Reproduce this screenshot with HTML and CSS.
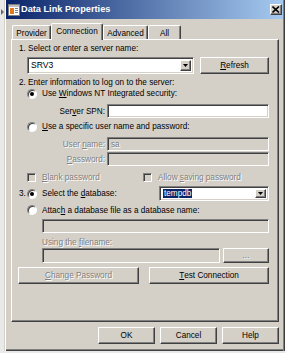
FILE: index.html
```html
<!DOCTYPE html>
<html lang="en">
<head>
    <meta charset="UTF-8">
    <meta name="viewport" content="width=device-width, initial-scale=1.0">
    <title>Data Link Properties</title>
    <link rel="stylesheet" href="styles.css">
</head>
<body>
    <div class="desk"><span class="desk-arrow"></span></div>
    <div class="window">
        <div class="titlebar">
            <svg class="app-icon" width="12" height="12" viewBox="0 0 12 12">
                <rect x="0.5" y="0.5" width="11" height="11" fill="#fff" stroke="#808080"/>
                <rect x="1" y="1" width="10" height="2" fill="#c0c0c0"/>
                <rect x="2" y="4" width="4" height="6" fill="#e07a1f"/>
                <rect x="7" y="4" width="3" height="1" fill="#808080"/>
                <rect x="7" y="6" width="3" height="1" fill="#808080"/>
                <rect x="7" y="8" width="3" height="1" fill="#808080"/>
            </svg>
            <span class="title">Data Link Properties</span>
            <span class="close-btn">
                <svg width="8" height="7" viewBox="0 0 8 7"><path d="M0.5 0.5L7 6.5M7 0.5L0.5 6.5" stroke="#000" stroke-width="1.6"/></svg>
            </span>
        </div>

        <div class="tabs">
            <div class="tab tab-provider">Provider</div>
            <div class="tab tab-connection active">Connection</div>
            <div class="tab tab-advanced">Advanced</div>
            <div class="tab tab-all">All</div>
        </div>

        <div class="panel">
            <div class="label-row">1. Select or enter a server name:</div>
            <div class="server-row">
                <div class="combo server-combo">
                    <span class="combo-text">SRV3</span>
                    <span class="combo-btn"><svg width="5" height="3" viewBox="0 0 5 3"><path d="M0 0H5L2.5 3Z" fill="#000"/></svg></span>
                </div>
                <div class="button refresh-btn"><u>R</u>efresh</div>
            </div>

            <div class="label-row step-two">2. Enter information to log on to the server:</div>
            <div class="option-row">
                <span class="radio checked"></span>
                <span>Use <u>W</u>indows NT Integrated security:</span>
            </div>
            <div class="field-row spn-row">
                <span class="field-label">Ser<u>v</u>er SPN:</span>
                <span class="textbox"></span>
            </div>
            <div class="option-row user-option">
                <span class="radio"></span>
                <span><u>U</u>se a specific user name and password:</span>
            </div>
            <div class="field-row user-row disabled">
                <span class="field-label">User <u>n</u>ame:</span>
                <span class="textbox">sa</span>
            </div>
            <div class="field-row pass-row disabled">
                <span class="field-label"><u>P</u>assword:</span>
                <span class="textbox"></span>
            </div>
            <div class="check-row disabled">
                <span class="check-item"><span class="checkbox"></span><span><u>B</u>lank password</span></span>
                <span class="check-item"><span class="checkbox"></span><span>Allow <u>s</u>aving password</span></span>
            </div>

            <div class="db-row">
                <span class="step-num">3.</span>
                <span class="radio checked"></span>
                <span class="db-label">Select the <u>d</u>atabase:</span>
                <div class="combo db-combo">
                    <span class="combo-text"><span class="selected">tempdb</span></span>
                    <span class="combo-btn"><svg width="5" height="3" viewBox="0 0 5 3"><path d="M0 0H5L2.5 3Z" fill="#000"/></svg></span>
                </div>
            </div>
            <div class="option-row attach-option">
                <span class="radio"></span>
                <span>Attac<u>h</u> a database file as a database name:</span>
            </div>
            <div class="textbox attach-box"></div>
            <div class="label-row using-label disabled"><span>Using the <u>f</u>ilename:</span></div>
            <div class="file-row">
                <span class="textbox file-box"></span>
                <span class="button browse-btn disabled"><span>...</span></span>
            </div>
            <div class="action-row">
                <div class="button change-btn disabled"><span><u>C</u>hange Password</span></div>
                <div class="button test-btn"><u>T</u>est Connection</div>
            </div>
        </div>

        <div class="footer">
            <div class="button footer-btn">OK</div>
            <div class="button footer-btn">Cancel</div>
            <div class="button footer-btn">Help</div>
        </div>
    </div>
</body>
</html>
```

FILE: styles.css
```css
* {
    box-sizing: border-box;
}

html, body {
    margin: 0;
}

body {
    width: 285px;
    height: 353px;
    overflow: hidden;
    display: flex;
    background: #e9e9e9;
    font-family: "Liberation Sans", Arial, sans-serif;
    font-size: 8.2px;
    line-height: 11px;
    color: #000;
}

u {
    text-decoration: underline;
    text-underline-offset: 1px;
}

.desk {
    width: 4px;
    padding-top: 9px;
}

.desk-arrow {
    display: block;
    width: 0;
    height: 0;
    margin-left: 1px;
    border-left: 3px solid #6a6a6a;
    border-top: 3px solid transparent;
    border-bottom: 3px solid transparent;
}

.window {
    flex: 1;
    height: 351px;
    display: flex;
    flex-direction: column;
    background: #d4d0c8;
    padding: 0 2px 0 2px;
    box-shadow: inset 1px 0 #d4d0c8, inset 2px 0 #fff, inset -1px 0 #404040, inset -2px 0 #808080, inset 0 -1px #404040, inset 0 -2px #808080;
}

/* title bar */
.titlebar {
    height: 19px;
    display: flex;
    align-items: center;
    padding-left: 2px;
    background: linear-gradient(to right, #0a246a, #a6caf0);
    color: #fff;
}

.app-icon {
    margin-right: 1px;
}

.title {
    flex: 1;
    font-weight: bold;
    font-size: 9.2px;
}

.close-btn {
    width: 12px;
    height: 11px;
    margin-right: 1px;
    display: flex;
    align-items: center;
    justify-content: center;
    background: #d4d0c8;
    border: 1px solid;
    border-color: #fff #404040 #404040 #fff;
    box-shadow: inset -1px -1px #808080;
}

/* tabs */
.tabs {
    display: flex;
    align-items: flex-end;
    height: 16px;
    margin-top: 4px;
    margin-left: 6px;
}

.tab {
    height: 14px;
    display: flex;
    align-items: center;
    justify-content: center;
    background: #d4d0c8;
    border: 1px solid;
    border-bottom: none;
    border-color: #fff #404040 #404040 #fff;
    border-radius: 2px 2px 0 0;
    box-shadow: inset -1px 0 #808080;
    padding-top: 1px;
}

.tab.active {
    height: 17px;
    margin-bottom: -1px;
    position: relative;
    z-index: 1;
    padding-top: 0;
    padding-bottom: 2px;
}

.tab-provider { width: 39px; }
.tab-connection { width: 52px; }
.tab-advanced { width: 45px; }
.tab-all { width: 33px; }

/* property page */
.panel {
    width: 268px;
    height: 283px;
    margin-left: 5px;
    padding: 3px 9px 0 7px;
    display: flex;
    flex-direction: column;
    border: 1px solid;
    border-color: #fff #404040 #404040 #fff;
    box-shadow: inset -1px -1px #808080;
}

.disabled {
    color: #808080;
    text-shadow: 1px 1px 0 #fff;
}

.label-row {
    height: 11px;
    white-space: nowrap;
}

.step-two {
    margin-top: 3px;
}

.server-row {
    display: flex;
    margin-top: 3px;
    height: 17px;
}

.combo {
    display: flex;
    align-items: stretch;
    background: #fff;
    border: 1px solid;
    border-color: #808080 #fff #fff #808080;
    box-shadow: inset 1px 1px #404040, inset -1px -1px #d4d0c8;
    padding: 2px;
}

.combo-text {
    flex: 1;
    display: flex;
    align-items: center;
    padding-left: 1px;
}

.combo-btn {
    width: 11px;
    display: flex;
    align-items: center;
    justify-content: center;
    background: #d4d0c8;
    border: 1px solid;
    border-color: #fff #404040 #404040 #fff;
    box-shadow: inset -1px -1px #808080;
}

.server-combo {
    width: 167px;
    margin-left: 8px;
    font-size: 8.6px;
}

.button {
    display: flex;
    align-items: center;
    justify-content: center;
    background: #d4d0c8;
    border: 1px solid;
    border-color: #fff #404040 #404040 #fff;
    box-shadow: inset -1px -1px #808080;
    white-space: nowrap;
}

.refresh-btn {
    width: 69px;
    margin-left: 6px;
}

.option-row {
    display: flex;
    align-items: center;
    height: 11px;
    padding-left: 8px;
    white-space: nowrap;
}

.radio {
    width: 10px;
    height: 10px;
    margin-right: 5px;
    flex-shrink: 0;
    display: flex;
    align-items: center;
    justify-content: center;
    border-radius: 50%;
    background: #fff;
    border: 1px solid;
    border-color: #808080 #fff #fff #808080;
    box-shadow: inset 1px 1px #404040;
}

.radio.checked::after {
    content: "";
    width: 4px;
    height: 4px;
    border-radius: 50%;
    background: #000;
}

.field-row {
    display: flex;
    align-items: center;
    height: 14px;
    white-space: nowrap;
}

.field-label {
    width: 86px;
    margin-right: 2px;
    text-align: right;
}

.textbox {
    display: flex;
    align-items: center;
    height: 14px;
    padding-left: 3px;
    background: #fff;
    border: 1px solid;
    border-color: #808080 #fff #fff #808080;
    box-shadow: inset 1px 1px #404040, inset -1px -1px #d4d0c8;
}

.field-row .textbox {
    flex: 1;
}

.disabled .textbox,
.textbox.attach-box,
.textbox.file-box {
    background: #d4d0c8;
}

.spn-row { margin-top: 5px; }
.user-option { margin-top: 3px; }
.user-row { margin-top: 5px; }
.pass-row { margin-top: 1px; }

.check-row {
    display: flex;
    align-items: center;
    height: 12px;
    margin-top: 5px;
    padding-left: 8px;
    white-space: nowrap;
}

.check-item {
    display: flex;
    align-items: center;
    width: 116px;
}

.checkbox {
    width: 9px;
    height: 9px;
    margin-right: 6px;
    background: #d4d0c8;
    border: 1px solid;
    border-color: #808080 #fff #fff #808080;
    box-shadow: inset 1px 1px #404040;
}

.db-row {
    display: flex;
    align-items: center;
    height: 15px;
    margin-top: 3px;
    white-space: nowrap;
}

.step-num {
    width: 8px;
}

.db-label {
    flex: 1;
}

.db-combo {
    width: 110px;
    height: 15px;
    padding: 2px;
}

.selected {
    background: #0a246a;
    color: #fff;
    padding: 0 1px;
    line-height: 9px;
}

.attach-option {
    height: 12px;
    margin-top: 3px;
}

.attach-box {
    margin-top: 3px;
    margin-left: 23px;
}

.using-label {
    margin-top: 4px;
    padding-left: 23px;
}

.file-row {
    display: flex;
    height: 15px;
    padding-left: 23px;
}

.file-box {
    width: 178px;
    height: 15px;
}

.browse-btn {
    width: 46px;
    margin-left: 3px;
}

.action-row {
    display: flex;
    height: 17px;
    margin-top: 4px;
    margin-left: -1px;
}

.change-btn {
    width: 121px;
}

.test-btn {
    width: 120px;
    margin-left: 10px;
}

/* dialog buttons */
.footer {
    display: flex;
    justify-content: flex-end;
    gap: 5px;
    margin-top: 5px;
    padding-right: 4px;
}

.footer-btn {
    width: 57px;
    height: 17px;
}
```
